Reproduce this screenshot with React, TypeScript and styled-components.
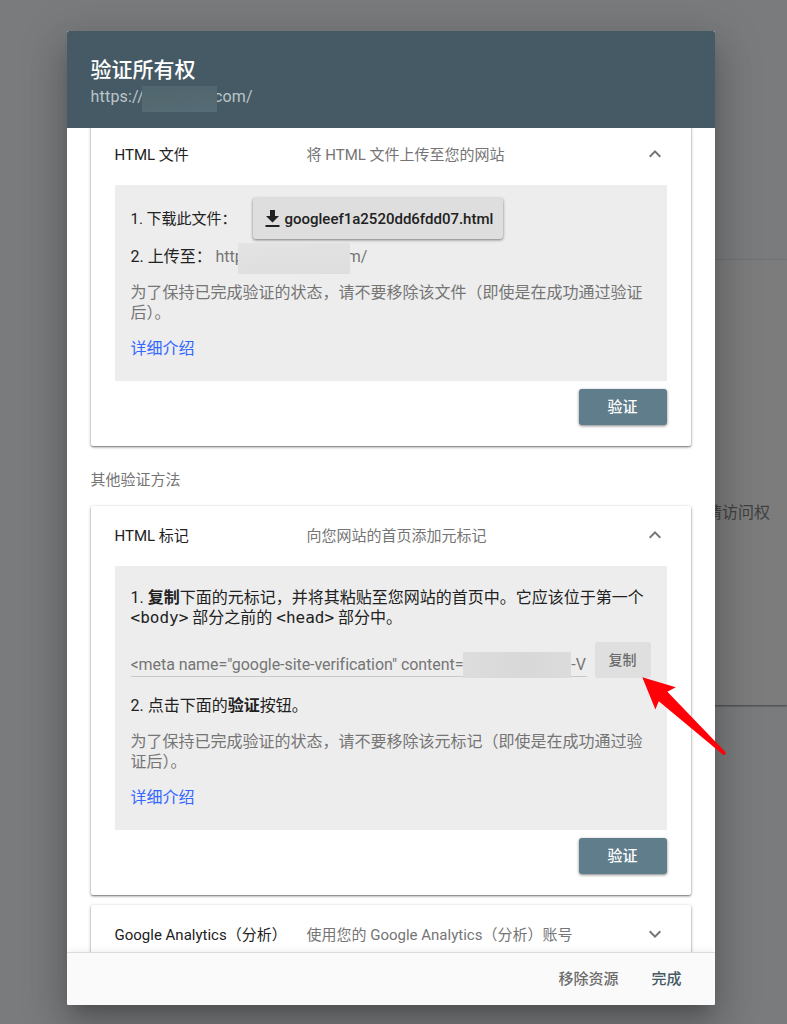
import React from "react";
import styled, { createGlobalStyle } from "styled-components";

const GlobalStyle = createGlobalStyle`
  * { box-sizing: border-box; }
  body {
    margin: 0;
    background: #797b7d;
    font-family: Roboto, "Noto Sans CJK SC", sans-serif;
    -webkit-font-smoothing: antialiased;
  }
  p { margin: 0; }
`;

const Page = styled.div`
  position: relative;
  width: 787px;
  height: 1024px;
  overflow: hidden;
  padding-top: 260px;
  background: #797b7d;
`;

const BackgroundCard = styled.div`
  display: flex;
  align-items: center;
  justify-content: flex-end;
  height: 445px;
  margin-left: 400px;
  padding: 57px 17px 0 0;
  background: #7c7c7c;
  box-shadow: 0 1px 2px rgba(0, 0, 0, 0.45), 0 0 2px rgba(0, 0, 0, 0.12);
  color: #414141;
  font-size: 16px;
`;

const Dialog = styled.div`
  position: absolute;
  top: 31px;
  left: 67px;
  width: 648px;
  height: 974px;
  display: flex;
  flex-direction: column;
  border-radius: 2px;
  overflow: hidden;
  background: #fff;
`;

const DialogShadow = styled(Dialog)`
  overflow: visible;
  box-shadow: 0 11px 15px -7px rgba(0, 0, 0, 0.2), 0 24px 38px 3px rgba(0, 0, 0, 0.14),
    0 9px 46px 8px rgba(0, 0, 0, 0.12);
`;

const Header = styled.header`
  flex: none;
  height: 97px;
  padding: 25px 23.5px 0;
  background: #455a64;
`;

const Title = styled.h1`
  margin: 0;
  height: 27px;
  line-height: 29px;
  font-size: 21px;
  font-weight: 500;
  color: #fff;
`;

const SiteUrl = styled.div`
  display: flex;
  align-items: center;
  height: 26px;
  font-size: 16px;
  letter-spacing: 0.2px;
  color: #bdc5c9;
`;

const Redacted = styled.span<{ $w: number; $h: number; $tone: string; $left?: number; $right?: number; $top?: number }>`
  position: relative;
  z-index: 1;
  flex: none;
  width: ${(p) => p.$w}px;
  height: ${(p) => p.$h}px;
  margin: ${(p) => p.$top ?? 0}px ${(p) => p.$right ?? 0}px 0 ${(p) => p.$left ?? 0}px;
  background: ${(p) => p.$tone};
`;

const Body = styled.main`
  flex: 1;
  min-height: 0;
  overflow: hidden;
  padding: 0 24px;
`;

const Card = styled.section<{ $height: number; $offset?: number }>`
  height: ${(p) => p.$height}px;
  margin-top: ${(p) => p.$offset ?? 0}px;
  padding: 0 24px;
  border-radius: 2px;
  background: #fff;
  box-shadow: 0 1px 2px rgba(0, 0, 0, 0.5), 0 1px 4px rgba(0, 0, 0, 0.14);
`;

const Summary = styled.div`
  display: grid;
  grid-template-columns: 192px 1fr 24px;
  align-items: center;
  height: 60px;
  padding-bottom: 3px;
  margin-left: -0.5px;
  margin-right: 0.5px;
  font-size: 15px;
  color: #212121;
  white-space: nowrap;
`;

const Description = styled.span`
  color: #757575;
`;

const Panel = styled.div<{ $height: number; $top: number }>`
  height: ${(p) => p.$height}px;
  padding: ${(p) => p.$top}px 16px 0 15.5px;
  background: #ededed;
  font-size: 16px;
  line-height: 20px;
  color: #212121;
`;

const Row = styled.div<{ $height: number; $size?: number; $gap?: number }>`
  display: flex;
  align-items: center;
  height: ${(p) => p.$height}px;
  margin-top: ${(p) => p.$gap ?? 0}px;
  font-size: ${(p) => p.$size ?? 16}px;
  white-space: nowrap;
`;

const StepLabel = styled.span<{ $width: number }>`
  flex: none;
  width: ${(p) => p.$width}px;
`;

const Download = styled.button`
  display: flex;
  align-items: center;
  gap: 4px;
  width: 250px;
  height: 41px;
  padding: 0 0 0 12px;
  border: 0;
  border-radius: 3px;
  background: #dedede;
  box-shadow: 0 1px 3px rgba(0, 0, 0, 0.5);
  color: #212121;
  font: 500 15px Roboto, sans-serif;
`;

const Muted = styled.span`
  color: #757575;
`;

const Note = styled.p<{ $gap: number }>`
  margin-top: ${(p) => p.$gap}px;
  color: #757575;
`;

const Link = styled.a<{ $gap: number }>`
  display: block;
  margin-top: ${(p) => p.$gap}px;
  color: #3367ff;
`;

const Code = styled.code`
  font-family: "DejaVu Sans Mono", monospace;
  font-size: 16px;
`;

const CopyRow = styled.div`
  display: flex;
  justify-content: space-between;
  margin-top: 14px;
  height: 36px;
`;

const MetaField = styled.div`
  display: flex;
  align-items: center;
  width: 456px;
  height: 26px;
  margin-top: 10px;
  overflow: hidden;
  background: linear-gradient(#c9c9c9, #c9c9c9) 0 24px / 100% 1px no-repeat;
  color: #757575;
  line-height: 22px;
  letter-spacing: -0.06px;
  white-space: nowrap;
`;

const CopyButton = styled.button`
  width: 56px;
  height: 36px;
  padding: 0 1px 3px 0;
  border: 0;
  border-radius: 3px;
  background: #dfdfdf;
  color: #6b6b6b;
  font: 500 14px Roboto, "Noto Sans CJK SC", sans-serif;
`;

const Actions = styled.div`
  display: flex;
  justify-content: flex-end;
  padding-top: 8px;
`;

const VerifyButton = styled.button`
  width: 88px;
  height: 36px;
  padding: 0 1px 3px 0;
  border: 0;
  border-radius: 3px;
  background: #607d8b;
  box-shadow: 0 1px 3px rgba(0, 0, 0, 0.5);
  color: #fff;
  font: 500 15px Roboto, "Noto Sans CJK SC", sans-serif;
`;

const SectionTitle = styled.h2`
  margin: 23px 0 0 -0.5px;
  height: 22px;
  line-height: 22px;
  font-size: 15px;
  font-weight: 400;
  color: #757575;
`;

const Footer = styled.footer`
  position: relative;
  flex: none;
  display: flex;
  align-items: center;
  justify-content: flex-end;
  gap: 33px;
  height: 53px;
  padding: 0 33.5px 4px 0;
  border-top: 1px solid #dcdcdc;
  background: #fafafa;
  box-shadow: 0 -1px 8px rgba(0, 0, 0, 0.07);
`;

const TextButton = styled.button<{ $primary?: boolean }>`
  padding: 0;
  border: 0;
  background: none;
  color: ${(p) => (p.$primary ? "#455a64" : "#6b6b6b")};
  font: 500 15px Roboto, "Noto Sans CJK SC", sans-serif;
`;

const Pointer = styled.svg`
  position: absolute;
  left: 640px;
  top: 675px;
`;

const Chevron = ({ down }: { down?: boolean }) => (
  <svg width="24" height="24" viewBox="0 0 24 24" fill="#757575">
    {down ? (
      <path d="M7.41 8.59 12 13.17l4.59-4.58L18 10l-6 6-6-6z" />
    ) : (
      <path d="M12 8l-6 6 1.41 1.41L12 10.83l4.59 4.58L18 14z" />
    )}
  </svg>
);

const DownloadIcon = () => (
  <svg width="16" height="18" viewBox="0 0 16 18" fill="#212121">
    <path d="M5 0h5v6h4L7.5 12.5 1 6h4zM.5 15h14v2H.5z" />
  </svg>
);

export default function App() {
  return (
    <Page>
      <GlobalStyle />
      <BackgroundCard>申请访问权</BackgroundCard>
      <DialogShadow />
      <Dialog role="dialog">
        <Header>
          <Title>验证所有权</Title>
          <SiteUrl>
            <span>https://</span>
            <Redacted $w={75} $h={26} $left={-1.5} $right={-3.5} $top={5} $tone="linear-gradient(175deg, #506670, #53686f 45%, #566c77)" />
            <span>com/</span>
          </SiteUrl>
        </Header>
        <Body>
          <Card $height={321} $offset={-3}>
            <Summary>
              <span>HTML 文件</span>
              <Description>将 HTML 文件上传至您的网站</Description>
              <Chevron />
            </Summary>
            <Panel $height={196} $top={13}>
              <Row $height={41} $size={15}>
                <StepLabel $width={122}>1. 下载此文件：</StepLabel>
                <Download>
                  <DownloadIcon />
                  googleef1a2520dd6fdd07.html
                </Download>
              </Row>
              <Row $height={20} $gap={8}>
                <StepLabel $width={85}>2. 上传至：</StepLabel>
                <Muted>http</Muted>
                <Redacted $w={112} $h={31} $left={-5.5} $right={-3.5} $top={2} $tone="linear-gradient(175deg, #e3e3e3, #dedede)" />
                <Muted>m/</Muted>
              </Row>
              <Note $gap={16}>为了保持已完成验证的状态，请不要移除该文件（即使是在成功通过验证后）。</Note>
              <Link $gap={16}>详细介绍</Link>
            </Panel>
            <Actions>
              <VerifyButton>验证</VerifyButton>
            </Actions>
          </Card>
          <SectionTitle>其他验证方法</SectionTitle>
          <Card $height={389} $offset={15}>
            <Summary>
              <span>HTML 标记</span>
              <Description>向您网站的首页添加元标记</Description>
              <Chevron />
            </Summary>
            <Panel $height={264} $top={22}>
              <p>
                1. <b>复制</b>下面的元标记，并将其粘贴至您网站的首页中。它应该位于第一个 <Code>&lt;body&gt;</Code> 部分之前的{" "}
                <Code>&lt;head&gt;</Code> 部分中。
              </p>
              <CopyRow>
                <MetaField>
                  <span>&lt;meta name="google-site-verification" content=</span>
                  <Redacted $w={108} $h={26} $tone="linear-gradient(90deg, #dddddd, #d8d8d8 60%, #dcdcdc)" />
                  <span>-V</span>
                </MetaField>
                <CopyButton>复制</CopyButton>
              </CopyRow>
              <Row $height={20} $gap={18}>
                <span>
                  2. 点击下面的<b>验证</b>按钮。
                </span>
              </Row>
              <Note $gap={16}>为了保持已完成验证的状态，请不要移除该元标记（即使是在成功通过验证后）。</Note>
              <Link $gap={16}>详细介绍</Link>
            </Panel>
            <Actions>
              <VerifyButton>验证</VerifyButton>
            </Actions>
          </Card>
          <Card $height={80} $offset={10}>
            <Summary>
              <span>Google Analytics（分析）</span>
              <Description>使用您的 Google Analytics（分析）账号</Description>
              <Chevron down />
            </Summary>
          </Card>
        </Body>
        <Footer>
          <TextButton>移除资源</TextButton>
          <TextButton $primary>完成</TextButton>
        </Footer>
      </Dialog>
      <Pointer width="90" height="84" viewBox="640 675 90 84">
        <path
          d="M642.3 677.2 675.8 687.3 667.4 691.7 725.6 752.3Q726.2 754.8 723.4 754.9L658.8 701.2 655.4 709.4Z"
          fill="#ff0008"
        />
      </Pointer>
    </Page>
  );
}
